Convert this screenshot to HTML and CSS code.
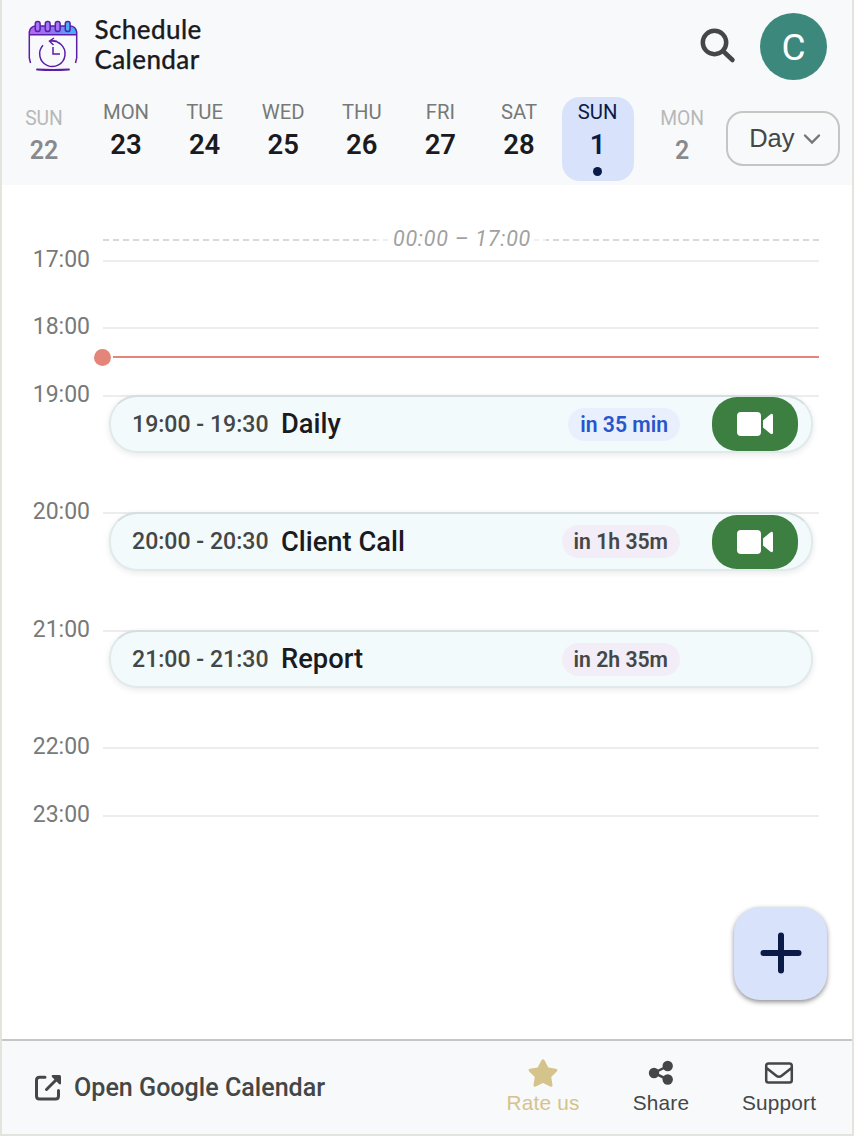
FILE: index.html
```html
<!DOCTYPE html>
<html lang="en">
<head>
    <title>Schedule Calendar</title>
    <meta charset="UTF-8">
    <meta name="viewport" content="width=device-width, initial-scale=1.0">
    <link rel="stylesheet" href="styles.css">
</head>
<body>
    <div class="popup">
        <header class="header">
            <div class="topbar">
                <svg class="logo" viewBox="0 0 50 52">
                    <defs>
                        <linearGradient id="logoTop" x1="0" x2="1" y1="0" y2="0">
                            <stop offset="0" stop-color="#b964f2"/>
                            <stop offset="0.5" stop-color="#8b78f5"/>
                            <stop offset="1" stop-color="#38b8fa"/>
                        </linearGradient>
                    </defs>
                    <path d="M1 15V12Q2 6 8 6H42Q48 6 49 12V15Z" fill="url(#logoTop)"/>
                    <g fill="none" stroke="#5a1ea8" stroke-width="1.500">
                        <path d="M2.500 43L1.300 38V12Q2.500 6 8 6H42Q47.500 6 48.700 12V38L47.500 43M1.500 14.800H48.500"/>
                        <path d="M9 49.500Q25 50.500 41 49.500" stroke-width="1.800" stroke-linecap="round"/>
                        <g fill="#a678f4">
                            <rect x="7.300" y="1.500" width="4.800" height="10" rx="2.200"/>
                            <rect x="17.300" y="1.500" width="4.800" height="10" rx="2.200"/>
                            <rect x="27.300" y="1.500" width="4.800" height="10" rx="2.200"/>
                            <rect x="37.300" y="1.500" width="4.800" height="10" rx="2.200" fill="#45b0f8"/>
                        </g>
                        <path d="M15 25.200A12.700 12.700 0 1 0 22 21.300M26 18L21.500 21.200L25.500 25M22 21.200Q26 20 29 21.500M25 27V34H32"/>
                    </g>
                </svg>
                <h1 class="title">Schedule<br>Calendar</h1>
                <svg class="search" viewBox="0 0 36 36">
                    <circle cx="14.500" cy="14.500" r="11.700"/>
                    <path d="M23 23L32.500 32"/>
                </svg>
                <div class="avatar">C</div>
            </div>
            <nav class="week">
                <div class="day day-out"><span class="day-name">SUN</span><span class="day-num">22</span></div>
                <div class="day"><span class="day-name">MON</span><span class="day-num">23</span></div>
                <div class="day"><span class="day-name">TUE</span><span class="day-num">24</span></div>
                <div class="day"><span class="day-name">WED</span><span class="day-num">25</span></div>
                <div class="day"><span class="day-name">THU</span><span class="day-num">26</span></div>
                <div class="day"><span class="day-name">FRI</span><span class="day-num">27</span></div>
                <div class="day"><span class="day-name">SAT</span><span class="day-num">28</span></div>
                <div class="day day-active"><span class="day-name">SUN</span><span class="day-num">1</span><i class="dot"></i></div>
                <div class="day day-out"><span class="day-name">MON</span><span class="day-num">2</span></div>
                <button class="view-select">Day
                    <svg class="chevron" viewBox="0 0 18 12"><path d="M2 2.500L9 9.500L16 2.500"/></svg>
                </button>
            </nav>
        </header>

        <main class="schedule">
            <div class="collapsed"><span>00:00 – 17:00</span></div>

            <div class="hour hour-first"><span class="hour-label">17:00</span><div class="slot"></div></div>
            <div class="hour"><span class="hour-label">18:00</span><div class="slot"></div>
                <div class="now"></div>
            </div>
            <div class="hour hour-event"><span class="hour-label">19:00</span>
                <div class="slot">
                    <div class="event">
                        <span class="event-time">19:00 - 19:30</span>
                        <span class="event-title">Daily</span>
                        <span class="badge badge-soon">in 35 min</span>
                        <button class="call"><svg viewBox="0 0 36 24"><rect width="24" height="24" rx="4"/><path d="M26 8.500L33.500 2.300Q36 1 36 3.500V20.500Q36 23 33.500 21.700L26 15.500Z"/></svg></button>
                    </div>
                </div>
            </div>
            <div class="hour hour-event hour-long"><span class="hour-label">20:00</span>
                <div class="slot">
                    <div class="event">
                        <span class="event-time">20:00 - 20:30</span>
                        <span class="event-title">Client Call</span>
                        <span class="badge">in 1h 35m</span>
                        <button class="call"><svg viewBox="0 0 36 24"><rect width="24" height="24" rx="4"/><path d="M26 8.500L33.500 2.300Q36 1 36 3.500V20.500Q36 23 33.500 21.700L26 15.500Z"/></svg></button>
                    </div>
                </div>
            </div>
            <div class="hour hour-event"><span class="hour-label">21:00</span>
                <div class="slot">
                    <div class="event">
                        <span class="event-time">21:00 - 21:30</span>
                        <span class="event-title">Report</span>
                        <span class="badge badge-last">in 2h 35m</span>
                    </div>
                </div>
            </div>
            <div class="hour"><span class="hour-label">22:00</span><div class="slot"></div></div>
            <div class="hour"><span class="hour-label">23:00</span><div class="slot"></div></div>

            <button class="add"><svg viewBox="0 0 42 42"><path d="M21 3.500V38.500M3.500 21H38.500"/></svg></button>
        </main>

        <footer class="footer">
            <a class="open-link">
                <svg viewBox="0 0 26 26">
                    <path d="M10 2.300H4.500Q1.500 2.300 1.500 5.300V21Q1.500 24 4.500 24H20.500Q23.500 24 23.500 21V15.500M11.500 14.500L21 5"/>
                    <path class="solid" d="M17.500 0H24.500Q26 0 26 1.500V8.500Q25.500 10 24 9L17 2Q16 .500 17.500 0Z"/>
                </svg>
                Open Google Calendar
            </a>
            <a class="action action-rate">
                <svg viewBox="0 0 30 28"><path d="M13.300 1.500Q15-1 16.700 1.500L20.300 8.600L28 9.800Q30.300 10.500 28.800 12.500L23.200 18L24.500 25.900Q24.500 28.400 22.200 27.500L15 23.900L7.800 27.500Q5.500 28.400 5.500 25.900L6.800 18L1.200 12.500Q-.300 10.500 2 9.800L9.700 8.600Z"/></svg>
                Rate us
            </a>
            <a class="action">
                <svg viewBox="0 0 30 28"><circle cx="8" cy="14" r="5.200"/><circle cx="21.700" cy="7" r="5.200"/><circle cx="21.700" cy="20.500" r="5.200"/><path class="stroke" d="M21.700 7L8 14L21.700 20.500"/></svg>
                Share
            </a>
            <a class="action">
                <svg viewBox="0 0 30 28"><path class="stroke" d="M4.500 4.500H25.500Q27.800 4.500 27.800 6.800V21.200Q27.800 23.500 25.500 23.500H4.500Q2.200 23.500 2.200 21.200V6.800Q2.200 4.500 4.500 4.500ZM2.500 9L12 16.500Q15 19 18 16.500L27.500 9"/></svg>
                Support
            </a>
        </footer>
    </div>
</body>
</html>
```
FILE: styles.css
```css
* { box-sizing: border-box; }
body { margin: 0; font-family: Roboto, sans-serif; color: #1b1b1f; background: #e3e4dc; }
button { margin: 0; padding: 0; border: none; font: inherit; }
svg { display: block; flex: none; }

.popup { display: flex; flex-direction: column; height: 1136px; border: solid #e3e4dc; border-width: 0 2px 2px; background: #fff; }

/* header */
.header { height: 185px; background: #f8f9fb; }
.topbar { display: flex; align-items: center; height: 93px; padding: 0 25px 0 26px; }
.logo { width: 50px; height: 52px; margin-bottom: 2px; }
.title { flex: 1; margin: 0 0 5px 16.5px; font: 500 26px/30px Lato, sans-serif; letter-spacing: 0.4px; -webkit-text-stroke: 0.25px #1b1b1f; }
.search { width: 36px; height: 36px; margin: 0 24px 2px 0; fill: none; stroke: #444746; stroke-width: 4.5; stroke-linecap: round; }
.avatar { width: 67px; height: 67px; border-radius: 50%; background: #3c887c; color: #fff; font-size: 37px; line-height: 69px; text-align: center; }

.week { display: flex; align-items: flex-start; height: 92px; padding: 4px 0 0 1px; }
.day { display: flex; flex-direction: column; align-items: center; width: 72px; height: 84px; margin-right: 6.6px; padding-top: 3px; border-radius: 18px; }
.day-name { font-size: 20.3px; line-height: 24px; color: #777976; }
.day-num { font-size: 27.5px; line-height: 32px; margin-top: 5px; font-weight: 600; }
.day-out { width: 82px; margin: 0; padding-top: 10px; opacity: 0.5; }
.day-out .day-name { font-size: 19.3px; }
.day-out .day-num { font-size: 25px; margin-top: 4px; }
.day-out + .day { margin-left: 5px; }
.day-active { background: #d8e3fb; color: #0a1b47; }
.day-active .day-name { color: #0a1b47; }
.day-active + .day-out { margin-left: 1px; }
.dot { width: 9px; height: 9px; margin-top: 6px; border-radius: 50%; background: #0a1b47; }
.view-select { display: flex; align-items: center; gap: 8px; width: 114px; height: 55px; margin: 14px 0 0 3px; padding-left: 21px; border: 2px solid #c5c6c3; border-radius: 17px; background: none; color: #444746; font: 25.5px "Liberation Sans", sans-serif; }
.chevron { width: 18px; height: 12px; fill: none; stroke: #747775; stroke-width: 2.4; stroke-linecap: round; }

/* schedule */
.schedule { position: relative; height: 854px; padding: 42px 33px 0 0; }
.collapsed { height: 33px; margin-left: 101px; text-align: center; line-height: 24px; background: repeating-linear-gradient(90deg, #d8d8d8 0 6px, transparent 6px 10px) 0 12px / 100% 2px no-repeat; }
.collapsed span { display: inline-block; padding: 0 15px 0 17px; background: linear-gradient(90deg, rgba(255, 255, 255, 0.6) 12px, #fff 12px calc(100% - 12px), rgba(255, 255, 255, 0.6) calc(100% - 12px)); color: #a0a1a0; font-size: 21.5px; font-style: italic; letter-spacing: 0.75px; }
.hour { position: relative; display: flex; height: 68px; }
.hour-first { height: 67px; }
.hour-event { height: 117px; }
.hour-long { height: 118px; }
.hour-label { width: 88px; margin: -14px 13px 0 0; text-align: right; color: #777a78; font-size: 23px; line-height: 27px; }
.slot { flex: 1; border-top: 2px solid #ededed; }
.now { position: absolute; left: 111px; right: 0; top: 29px; height: 2px; background: #e4857a; }
.now::before { content: ""; position: absolute; left: -19px; top: -7px; width: 17px; height: 17px; border-radius: 50%; background: #e4857a; }

.event { display: flex; align-items: center; height: 58px; margin: -2px 6px 0; border: 2px solid #e0eaeb; border-top-color: #d5dfdf; border-radius: 28px; background: #f2fafc; box-shadow: 0 2px 6px rgba(0, 0, 0, 0.09); padding: 0 13px 0 21px; }
.hour-long .event { height: 59px; }
.event-time { color: #444746; font-size: 23.1px; font-weight: 500; }
.event-title { flex: 1; margin-left: 12.5px; font-size: 27.3px; font-weight: 500; }
.badge { padding: 0 12px; border-radius: 17px; background: #f2edf7; color: #444746; font-size: 21.2px; line-height: 33px; font-weight: 600; }
.badge-soon { background: #e9effd; color: #2855cc; }
.badge-last { margin-right: 118px; }
.call { display: flex; align-items: center; justify-content: center; width: 86px; height: 54px; margin-left: 32px; border-radius: 25px; background: #3d7f40; }
.call svg { width: 36px; height: 24px; fill: #fff; }

.add { position: absolute; right: 25px; bottom: 39px; display: flex; align-items: center; justify-content: center; width: 93px; height: 93px; border-radius: 26px; background: #d8e3fb; box-shadow: 0 2px 5px rgba(0, 0, 0, 0.45); }
.add svg { width: 42px; height: 42px; margin-bottom: 1px; fill: none; stroke: #0a1b47; stroke-width: 6; stroke-linecap: round; }

/* footer */
.footer { display: flex; align-items: center; height: 95px; padding: 0 14px 0 33px; border-top: 2px solid #c5c6c6; background: #f8f9fb; color: #444746; }
.open-link { display: flex; flex: 1; align-items: center; gap: 13px; font-size: 25.1px; font-weight: 500; white-space: nowrap; }
.open-link svg { width: 26px; height: 26px; fill: none; stroke: #444746; stroke-width: 3; stroke-linecap: round; }
.open-link .solid { fill: #444746; stroke: none; }
.action { display: flex; flex-direction: column; align-items: center; gap: 4px; width: 118px; margin-bottom: 2px; font: 20.8px/24px "Liberation Sans", sans-serif; letter-spacing: 0.2px; }
.action svg { width: 30px; height: 28px; fill: #444746; }
.action-rate { color: #d5c38c; }
.action-rate svg { fill: #d5c38c; }
.action .stroke { fill: none; stroke: #444746; stroke-width: 2.5; }
```
